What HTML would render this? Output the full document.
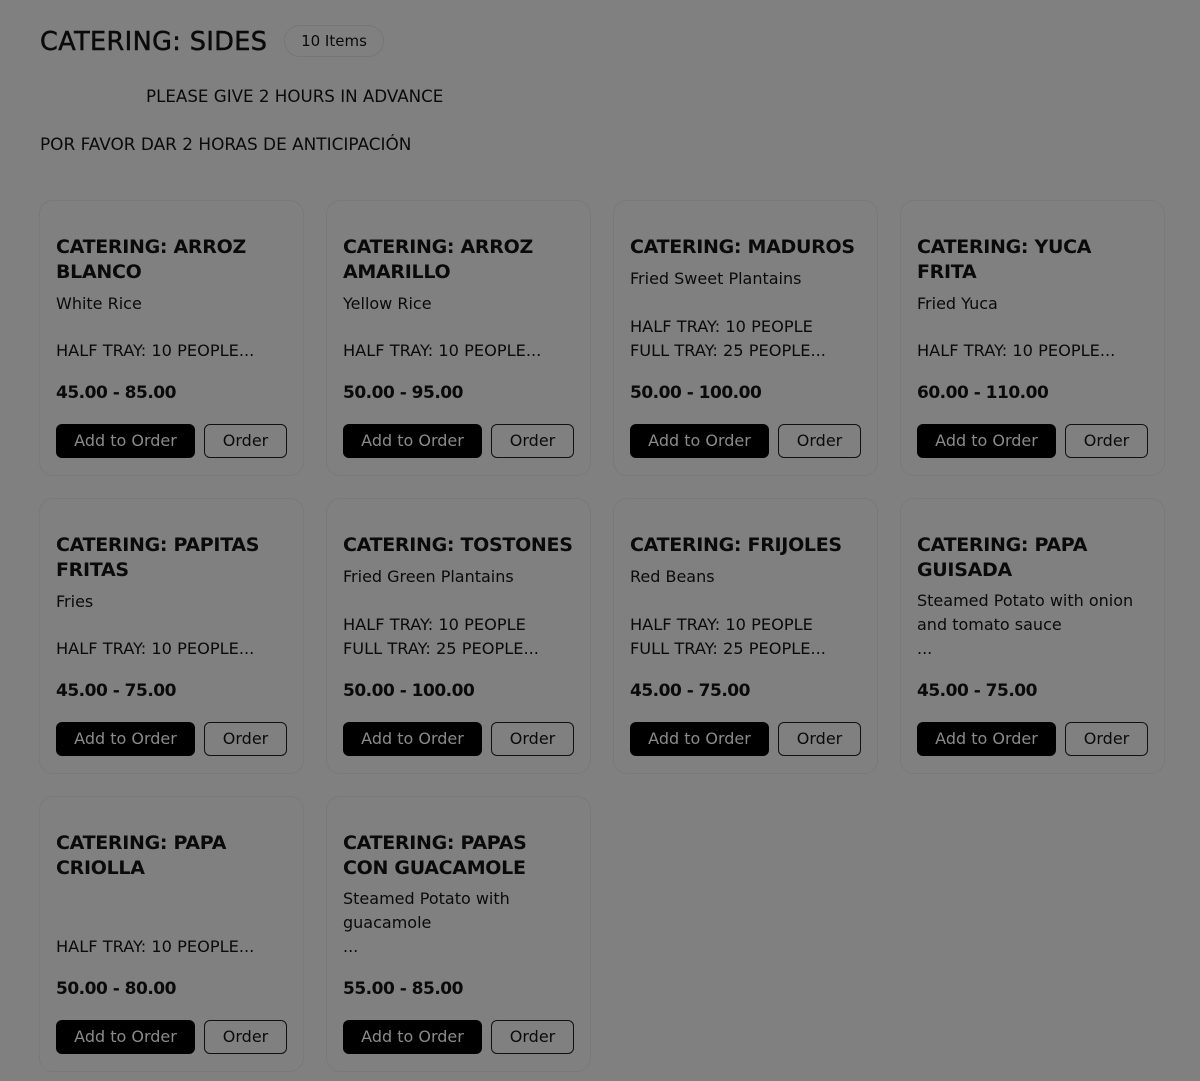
<!DOCTYPE html>
<html><head><meta charset="utf-8"><style>
*{box-sizing:border-box;margin:0;padding:0}
body{width:1200px;height:1081px;background:#808080;font-family:"DejaVu Sans","Liberation Sans",sans-serif;color:#0a0a0a;position:relative;overflow:hidden}
.h1{position:absolute;left:40px;top:25px;font-size:25.5px;font-weight:normal;letter-spacing:0.4px;line-height:34px;-webkit-text-stroke:0.5px #0a0a0a}
.pill{position:absolute;left:284px;top:25px;width:100px;height:32px;border:1px solid #767676;border-radius:16px;font-size:15px;line-height:30px;text-align:center}
.n1{position:absolute;left:146px;top:86px;font-size:16.7px;line-height:20px}
.n2{position:absolute;left:40px;top:134px;font-size:16.9px;line-height:20px}
.card{position:absolute;width:265px;height:276px;border:1px solid #797979;border-radius:14px;padding:34px 16px 17px;display:flex;flex-direction:column}
.t{font-size:19px;font-weight:bold;line-height:25px;white-space:nowrap;letter-spacing:-0.3px}
.d{font-size:16px;line-height:24px;margin-top:7px}
.d3{margin-top:6px}
.sp{flex:1}
.tr{font-size:16.2px;line-height:24px;white-space:nowrap}
.p{font-size:17px;font-weight:bold;line-height:24px;margin-top:18px;letter-spacing:-0.5px}
.b{display:flex;margin-top:19px;gap:9px}
.b1{width:139px;height:34px;background:#000;color:#8a8a8a;border-radius:6px;font-size:16px;line-height:34px;text-align:center}
.b2{width:83px;height:34px;border:1px solid #111;border-radius:6px;font-size:16px;line-height:32px;text-align:center}
</style></head><body>
<div class="h1">CATERING: SIDES</div>
<div class="pill">10 Items</div>
<div class="n1">PLEASE GIVE 2 HOURS IN ADVANCE</div>
<div class="n2">POR FAVOR DAR 2 HORAS DE ANTICIPACIÓN</div>

<div class="card" style="left:39px;top:200px"><div class="t">CATERING: ARROZ<br>BLANCO</div><div class="d">White Rice</div><div class="sp"></div><div class="tr">HALF TRAY: 10 PEOPLE...</div><div class="p">45.00 - 85.00</div><div class="b"><div class="b1">Add to Order</div><div class="b2">Order</div></div></div>
<div class="card" style="left:326px;top:200px"><div class="t">CATERING: ARROZ<br>AMARILLO</div><div class="d">Yellow Rice</div><div class="sp"></div><div class="tr">HALF TRAY: 10 PEOPLE...</div><div class="p">50.00 - 95.00</div><div class="b"><div class="b1">Add to Order</div><div class="b2">Order</div></div></div>
<div class="card" style="left:613px;top:200px"><div class="t">CATERING: MADUROS</div><div class="d">Fried Sweet Plantains</div><div class="sp"></div><div class="tr">HALF TRAY: 10 PEOPLE<br>FULL TRAY: 25 PEOPLE...</div><div class="p">50.00 - 100.00</div><div class="b"><div class="b1">Add to Order</div><div class="b2">Order</div></div></div>
<div class="card" style="left:900px;top:200px"><div class="t">CATERING: YUCA<br>FRITA</div><div class="d">Fried Yuca</div><div class="sp"></div><div class="tr">HALF TRAY: 10 PEOPLE...</div><div class="p">60.00 - 110.00</div><div class="b"><div class="b1">Add to Order</div><div class="b2">Order</div></div></div>

<div class="card" style="left:39px;top:498px"><div class="t">CATERING: PAPITAS<br>FRITAS</div><div class="d">Fries</div><div class="sp"></div><div class="tr">HALF TRAY: 10 PEOPLE...</div><div class="p">45.00 - 75.00</div><div class="b"><div class="b1">Add to Order</div><div class="b2">Order</div></div></div>
<div class="card" style="left:326px;top:498px"><div class="t">CATERING: TOSTONES</div><div class="d">Fried Green Plantains</div><div class="sp"></div><div class="tr">HALF TRAY: 10 PEOPLE<br>FULL TRAY: 25 PEOPLE...</div><div class="p">50.00 - 100.00</div><div class="b"><div class="b1">Add to Order</div><div class="b2">Order</div></div></div>
<div class="card" style="left:613px;top:498px"><div class="t">CATERING: FRIJOLES</div><div class="d">Red Beans</div><div class="sp"></div><div class="tr">HALF TRAY: 10 PEOPLE<br>FULL TRAY: 25 PEOPLE...</div><div class="p">45.00 - 75.00</div><div class="b"><div class="b1">Add to Order</div><div class="b2">Order</div></div></div>
<div class="card" style="left:900px;top:498px"><div class="t">CATERING: PAPA<br>GUISADA</div><div class="d d3" style="white-space:nowrap">Steamed Potato with onion<br>and tomato sauce<br>...</div><div class="sp"></div><div class="p">45.00 - 75.00</div><div class="b"><div class="b1">Add to Order</div><div class="b2">Order</div></div></div>

<div class="card" style="left:39px;top:796px"><div class="t">CATERING: PAPA<br>CRIOLLA</div><div class="sp"></div><div class="tr">HALF TRAY: 10 PEOPLE...</div><div class="p">50.00 - 80.00</div><div class="b"><div class="b1">Add to Order</div><div class="b2">Order</div></div></div>
<div class="card" style="left:326px;top:796px"><div class="t">CATERING: PAPAS<br>CON GUACAMOLE</div><div class="d d3">Steamed Potato with<br>guacamole<br>...</div><div class="sp"></div><div class="p">55.00 - 85.00</div><div class="b"><div class="b1">Add to Order</div><div class="b2">Order</div></div></div>
</body></html>
